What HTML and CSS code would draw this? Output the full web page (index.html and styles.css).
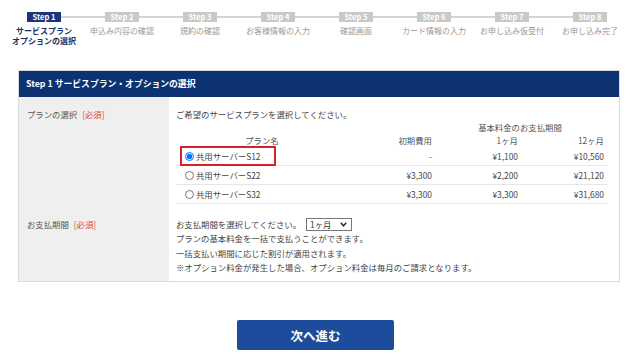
FILE: index.html
```
<!DOCTYPE html>
<html lang="ja">
<head>
<meta charset="UTF-8" />
<title>お申し込み</title>
<link rel="stylesheet" href="styles.css">
</head>
<body>

<ol class="steps">
  <li class="step active"><span class="badge">Step 1</span><span class="label">サービスプラン<br>オプションの選択</span></li>
  <li class="step"><span class="badge">Step 2</span><span class="label">申込み内容の確認</span></li>
  <li class="step"><span class="badge">Step 3</span><span class="label">規約の確認</span></li>
  <li class="step"><span class="badge">Step 4</span><span class="label">お客様情報の入力</span></li>
  <li class="step"><span class="badge">Step 5</span><span class="label">確認画面</span></li>
  <li class="step"><span class="badge">Step 6</span><span class="label">カード情報の入力</span></li>
  <li class="step"><span class="badge">Step 7</span><span class="label">お申し込み仮受付</span></li>
  <li class="step"><span class="badge">Step 8</span><span class="label">お申し込み完了</span></li>
</ol>

<div class="card">
  <div class="card-head">Step 1 サービスプラン・オプションの選択</div>
  <div class="form">
    <div class="label-cell">プランの選択 <span class="req">[必須]</span></div>
    <div class="field plan-field">
      <p class="intro">ご希望のサービスプランを選択してください。</p>
      <table class="plans">
        <colgroup>
          <col class="c-name"><col class="c-fee"><col class="c-m1"><col class="c-m12">
        </colgroup>
        <tr class="cap">
          <td></td><td></td>
          <td colspan="2" class="center">基本料金のお支払期間</td>
        </tr>
        <tr class="head">
          <td class="center">プラン名</td>
          <td class="num">初期費用</td>
          <td class="num">1ヶ月</td>
          <td class="num">12ヶ月</td>
        </tr>
        <tr class="row">
          <td><label class="pick picked"><input type="radio" name="plan" checked>共用サーバーS12</label></td>
          <td class="num">-</td>
          <td class="num">¥1,100</td>
          <td class="num">¥10,560</td>
        </tr>
        <tr class="row">
          <td><label class="pick"><input type="radio" name="plan">共用サーバーS22</label></td>
          <td class="num">¥3,300</td>
          <td class="num">¥2,200</td>
          <td class="num">¥21,120</td>
        </tr>
        <tr class="row">
          <td><label class="pick"><input type="radio" name="plan">共用サーバーS32</label></td>
          <td class="num">¥3,300</td>
          <td class="num">¥3,300</td>
          <td class="num">¥31,680</td>
        </tr>
      </table>
    </div>

    <div class="label-cell term-label">お支払期間 <span class="req">[必須]</span></div>
    <div class="field term-field">
      <p>お支払期間を選択してください。
        <span class="select-wrap">
          <select class="term"><option>1ヶ月</option><option>12ヶ月</option></select>
          <svg class="chev" width="7" height="5" viewBox="0 0 7 5"><path d="M0.8 0.8 L3.5 3.8 L6.2 0.8" fill="none" stroke="#333" stroke-width="1.6"/></svg>
        </span>
      </p>
      <p>プランの基本料金を一括で支払うことができます。</p>
      <p>一括支払い期間に応じた割引が適用されます。</p>
      <p>※オプション料金が発生した場合、オプション料金は毎月のご請求となります。</p>
    </div>
  </div>
</div>

<div class="actions">
  <button class="next">次へ進む</button>
</div>

</body>
</html>
```

FILE: styles.css
```
body { margin: 0; background: #fff; color: #444; font-family: "Noto Sans CJK JP", sans-serif; font-size: 8.4px; }
p { margin: 0; }

.steps { list-style: none; margin: 0; padding: 12px 11px 0 5px; display: grid; grid-template-columns: repeat(8, 1fr); }
.step { position: relative; display: flex; flex-direction: column; align-items: center; }
.step::before {
  content: ""; position: absolute; top: 4px; left: 0; right: 0; height: 2px; background: #d4d4d4;
}
.step:first-child::before { left: 50%; }
.step:last-child::before { right: 50%; }
.badge {
  position: relative; width: 34px; height: 10px; line-height: 10px;
  background: #c9c9c9; color: #fff; font-size: 7.5px; font-weight: bold; text-align: center;
}
.label { margin-top: 4px; color: #999; font-size: 8px; line-height: 10px; text-align: center; white-space: nowrap; }
.step.active .badge { background: #1b347a; }
.step.active .label { color: #1b2f6b; font-weight: bold; }

.card { margin: 24px 0 0 18px; width: 602px; border: 1px solid #dcdcdc; box-sizing: border-box; }
.card-head { background: #0c3272; color: #fff; font-weight: bold; font-size: 8.8px; height: 26px; line-height: 26px; padding-left: 7px; }
.form { display: grid; grid-template-columns: 150px 1fr; }
.label-cell { background: #efefef; color: #555; padding: 10px 0 0 8px; line-height: 14px; }
.req { color: #e0483c; margin-left: 3px; }
.field { padding: 10px 10px 0 7px; line-height: 14px; }

.plans { border-collapse: collapse; width: 432px; table-layout: fixed; }
.plans .c-name { width: 172px; }
.plans .c-fee { width: 88px; }
.plans .c-m1 { width: 86px; }
.plans .c-m12 { width: 86px; }
.plans td { padding: 0 4px 0 0; white-space: nowrap; }
.plans td:first-child { padding-left: 4px; }
.plans .cap td, .plans .head td { height: 13px; line-height: 13px; color: #555; }
.plans .center { text-align: center; }
.plans .num { text-align: right; }
.plans .row td { height: 18px; border-bottom: 1px solid #e6e6e6; }

.pick { display: inline-block; border: 2px solid transparent; padding: 0 14px 0 3px; margin: -1px 0; line-height: 16px; vertical-align: middle; }
.pick.picked { border-color: #d7212e; }
.pick input { width: 9px; height: 9px; margin: 0 2px 0 0; vertical-align: -1px; }

.term-field { padding: 13px 10px 7px 7px; line-height: 14.3px; }
.term-label { padding-top: 13px; line-height: 14.3px; }
.select-wrap { position: relative; display: inline-block; vertical-align: top; margin-left: 3px; }
.term {
  appearance: none; font-family: inherit; font-size: 8.4px; height: 13px; line-height: 11px;
  padding: 0 0 0 3px; width: 46px; border: 1px solid #777; border-radius: 0; background: #fff; color: #333;
  display: block; margin-top: 1px;
}
.chev { position: absolute; right: 5px; top: 5px; pointer-events: none; }

.actions { text-align: center; padding: 38px 9px 0 0; }
.next {
  width: 157px; height: 30px; border: none; border-radius: 2px;
  background: #1d4c9d; color: #fff; font-family: inherit; font-size: 12.5px; font-weight: bold;
}
```
